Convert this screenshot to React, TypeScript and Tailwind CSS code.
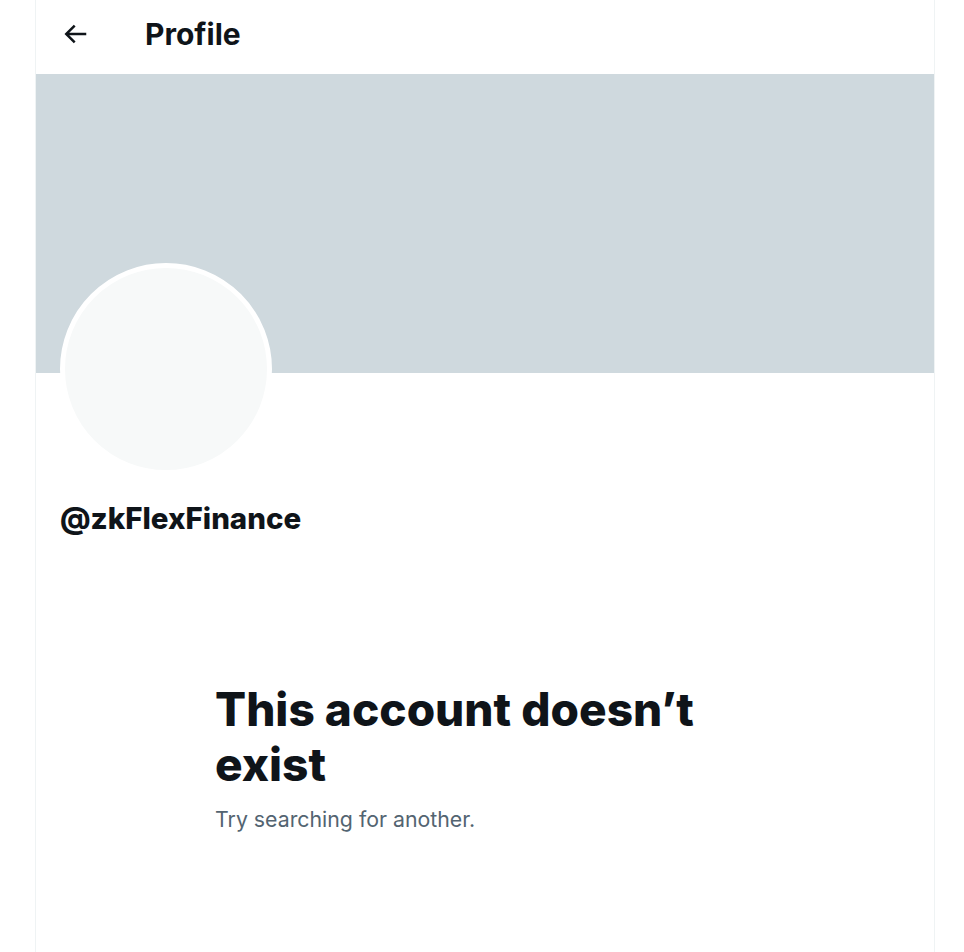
export default function App() {
  return (
    <div className="min-h-[952px] bg-white font-['Inter','Liberation_Sans',sans-serif] text-[#0f1419]">
      <div className="ml-[35px] min-h-[952px] w-[900px] border-x border-[#eff3f4]">
        {/* Header */}
        <div className="flex h-[74px] items-center px-6 pb-[6px]">
          <svg viewBox="0 0 24 24" className="h-[30px] w-[30px] fill-[#0f1419]">
            <path d="M7.414 13l5.043 5.04-1.414 1.42L3.586 12l7.457-7.46 1.414 1.42L7.414 11H21v2H7.414z" />
          </svg>
          <h1 className="ml-[55px] text-[30px] font-bold leading-none">Profile</h1>
        </div>

        {/* Banner */}
        <div className="h-[299px] bg-[#cfd9de]" />

        {/* Avatar + handle */}
        <div className="px-6">
          <div className="-mt-[110px] h-[212px] w-[212px] rounded-full border-[5px] border-white bg-[#f7f9f9]" />
          <div className="mt-[25px] text-[29.5px] font-extrabold leading-[36px]">@zkFlexFinance</div>
        </div>

        {/* Empty state */}
        <div className="mx-auto mt-[146px] max-w-[540px]">
          <h2 className="text-[46px] font-extrabold leading-[55px]">This account doesn’t exist</h2>
          <p className="mt-[12px] text-[21.3px] leading-[30px] text-[#536471]">Try searching for another.</p>
        </div>
      </div>
    </div>
  )
}
